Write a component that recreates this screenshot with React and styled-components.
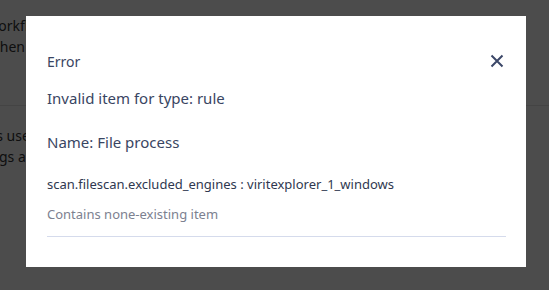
import styled, { createGlobalStyle } from "styled-components";

const GlobalStyle = createGlobalStyle`
  html, body {
    margin: 0;
    padding: 0;
    width: 549px;
    height: 290px;
    overflow: hidden;
    background: #fff;
  }
  body {
    font-family: "Noto Sans", "Open Sans", sans-serif;
  }
`;

const Page = styled.div`
  position: relative;
  width: 549px;
  height: 290px;
  overflow: hidden;
`;

const Behind = styled.div`
  margin-left: -38px;
  padding-top: 15px;
  font-size: 14px;
  color: #333;
  p {
    margin: 0;
    line-height: 21px;
  }
`;

const BehindRule = styled.hr`
  border: 0;
  border-top: 1px solid #e4e4e4;
  margin: 48px 0 19px;
`;

const Overlay = styled.div`
  position: absolute;
  inset: 0;
  background: rgba(0, 0, 0, 0.7);
  padding: 16px 23px 0 26px;
`;

const Modal = styled.div`
  width: 500px;
  height: 251px;
  background: #fff;
  box-sizing: border-box;
  padding: 35px 20px 0 21px;
  color: #394562;
`;

const Header = styled.div`
  display: flex;
  align-items: center;
  justify-content: space-between;
  height: 20px;
  padding-right: 2px;
`;

const Title = styled.div`
  font-size: 14px;
`;

const Close = styled.button`
  border: 0;
  background: none;
  padding: 0;
  display: flex;
  color: #3b4768;
`;

const Line = styled.div`
  font-size: ${(p) => p.$size || 14}px;
  color: ${(p) => p.$color || "#394562"};
  margin-top: ${(p) => p.$top || 0}px;
  line-height: 20px;
`;

const Divider = styled.div`
  margin-top: 12px;
  border-top: 1px solid #d5dbec;
`;

export default function App() {
  return (
    <>
      <GlobalStyle />
      <Page>
        <Behind>
          <p>the workflow</p>
          <p>run when rules</p>
          <BehindRule />
          <p>allows users</p>
          <p>settings and</p>
        </Behind>
        <Overlay>
          <Modal>
            <Header>
              <Title>Error</Title>
              <Close aria-label="close">
                <svg width="14" height="14" viewBox="0 0 14 14">
                  <path
                    d="M1.5 1.5 L12.5 12.5 M12.5 1.5 L1.5 12.5"
                    stroke="currentColor"
                    strokeWidth="2"
                  />
                </svg>
              </Close>
            </Header>
            <Line $size={15} $top={17}>Invalid item for type: rule</Line>
            <Line $size={15} $top={24}>Name: File process</Line>
            <Line $size={13} $top={22} $color="#2f3850">
              scan.filescan.excluded_engines : viritexplorer_1_windows
            </Line>
            <Line $size={13} $top={10} $color="#7c8190">
              Contains none-existing item
            </Line>
            <Divider />
          </Modal>
        </Overlay>
      </Page>
    </>
  );
}
